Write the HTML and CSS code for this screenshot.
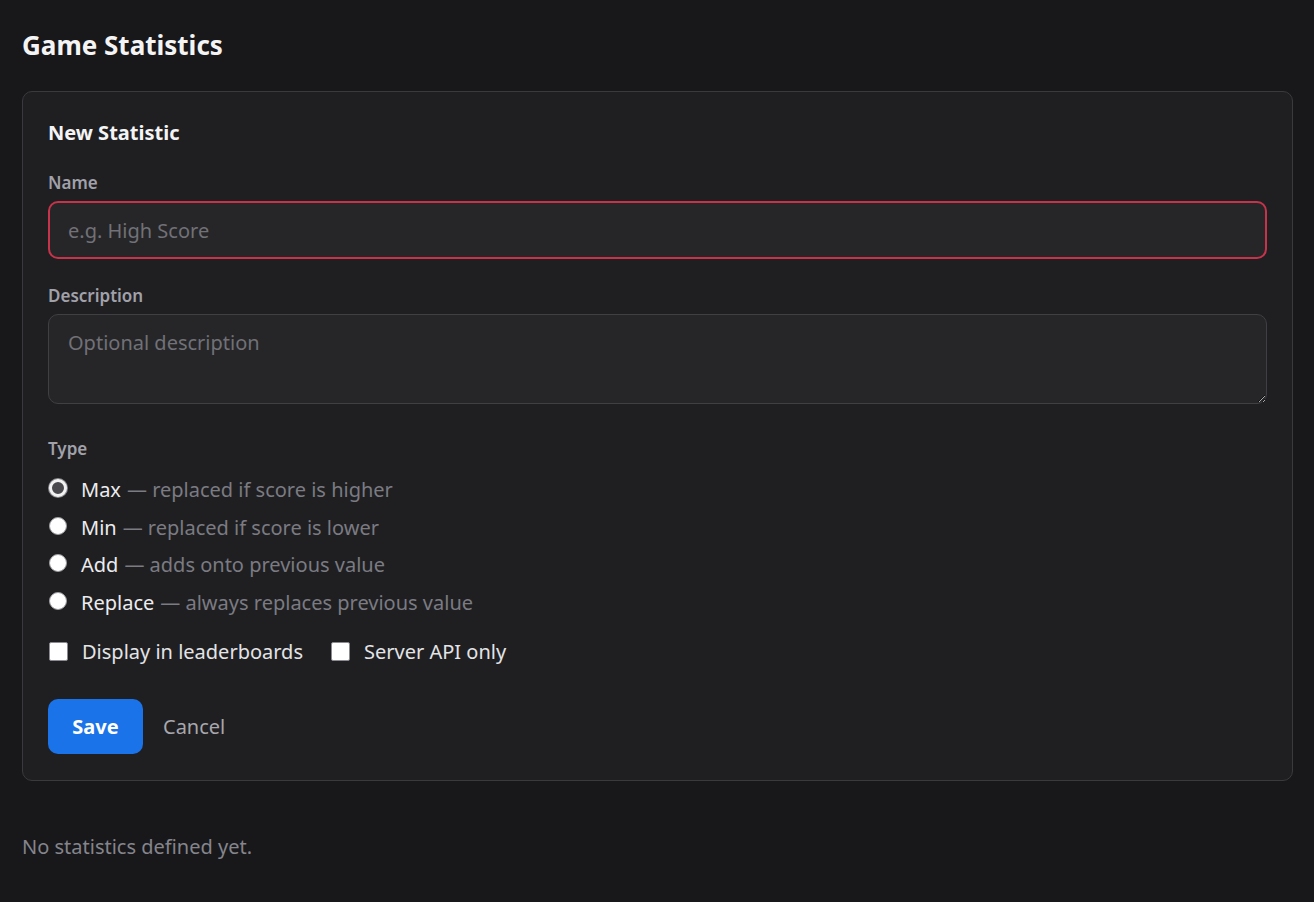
FILE: index.html
```html
<!DOCTYPE html>
<html lang="en">
<head>
<meta charset="utf-8">
<title>Game Statistics</title>
<link rel="stylesheet" href="styles.css">
</head>
<body>
<main class="page">
  <h1 class="page-title">Game Statistics</h1>
  <section class="card">
    <h2 class="card-title">New Statistic</h2>
    <div class="field">
      <label class="field-label" for="name">Name</label>
      <input class="text-input invalid" id="name" type="text" placeholder="e.g. High Score" autofocus>
    </div>
    <div class="field">
      <label class="field-label" for="desc">Description</label>
      <textarea class="text-input textarea" id="desc" placeholder="Optional description"></textarea>
    </div>
    <div class="field type-field">
      <div class="field-label">Type</div>
      <div class="radio-list">
        <label class="radio-row"><input type="radio" name="type" class="radio" checked><span class="opt-name">Max</span><span class="opt-desc">— replaced if score is higher</span></label>
        <label class="radio-row"><input type="radio" name="type" class="radio"><span class="opt-name">Min</span><span class="opt-desc">— replaced if score is lower</span></label>
        <label class="radio-row"><input type="radio" name="type" class="radio"><span class="opt-name">Add</span><span class="opt-desc">— adds onto previous value</span></label>
        <label class="radio-row"><input type="radio" name="type" class="radio"><span class="opt-name">Replace</span><span class="opt-desc">— always replaces previous value</span></label>
      </div>
    </div>
    <div class="check-row">
      <label class="check"><input type="checkbox" class="checkbox"><span>Display in leaderboards</span></label>
      <label class="check"><input type="checkbox" class="checkbox"><span>Server API only</span></label>
    </div>
    <div class="actions">
      <button class="btn-primary" type="button">Save</button>
      <button class="btn-link" type="button">Cancel</button>
    </div>
  </section>
  <p class="empty">No statistics defined yet.</p>
</main>
</body>
</html>
```

FILE: styles.css
```css
html, body {
  margin: 0;
  padding: 0;
  background: #18181b;
}
body {
  font-family: "Noto Sans", "Open Sans", "Liberation Sans", sans-serif;
  color: #e4e4e7;
  font-size: 20px;
}
.page {
  padding: 26px 21px 0 22px;
}
.page-title {
  margin: 0 0 27px 0;
  font-size: 26px;
  line-height: 38px;
  font-weight: 700;
  color: #f4f4f5;
}
.card {
  background: #1f1f22;
  border: 1px solid #3a3a3e;
  border-radius: 10px;
  padding: 25px 25px 26px 25px;
}
.card-title {
  margin: 0 0 22px 0;
  font-size: 20px;
  line-height: 32px;
  font-weight: 700;
  color: #f4f4f5;
}
.field {
  display: flex;
  flex-direction: column;
  margin-bottom: 25px;
}
.field-label {
  font-size: 17px;
  font-weight: 600;
  line-height: 24px;
  color: #a1a1aa;
  margin-bottom: 6px;
}
.text-input {
  box-sizing: border-box;
  width: 100%;
  background: #262629;
  border: 1px solid #3f3f44;
  border-radius: 10px;
  color: #e4e4e7;
  font-family: inherit;
  font-size: 20px;
  padding: 0 19px;
  outline: none;
  color-scheme: dark;
}
.text-input::placeholder {
  color: #717177;
}
.text-input.invalid {
  height: 58px;
  border: 2px solid #c8334c;
  padding: 0 18px;
  caret-color: #ffffff;
}
.textarea {
  display: block;
  height: 90px;
  padding: 13px 19px;
  resize: vertical;
  line-height: 30px;
}
.type-field {
  margin-top: 33px;
  margin-bottom: 19px;
}
.type-field .field-label {
  margin-bottom: 14px;
}
.radio-list {
  display: flex;
  flex-direction: column;
  gap: 7.5px;
}
.radio-row {
  display: flex;
  align-items: center;
  line-height: 30px;
}
.radio {
  appearance: none;
  -webkit-appearance: none;
  width: 18px;
  height: 18px;
  margin: 0 14px 4px 1px;
  border-radius: 50%;
  background: #ffffff;
  border: 1px solid #9a9aa0;
  box-sizing: border-box;
  flex: none;
}
.radio:checked {
  border: 3px solid #f2f2f2;
  background: #4a4a4e;
  box-shadow: 0 0 0 1px #8a8a90;
}
.opt-name {
  color: #ececef;
  margin-right: 6px;
}
.opt-desc {
  color: #7b7b82;
}
.check-row {
  display: flex;
  align-items: center;
  gap: 27px;
  margin-bottom: 32px;
}
.check {
  display: flex;
  align-items: center;
  line-height: 30px;
  color: #e4e4e7;
}
.checkbox {
  appearance: none;
  -webkit-appearance: none;
  width: 19px;
  height: 19px;
  margin: 0 14px 0 1px;
  background: #ffffff;
  border: 1px solid #8a8a90;
  border-radius: 2px;
  box-sizing: border-box;
  flex: none;
}
.actions {
  display: flex;
  align-items: center;
  gap: 20px;
}
.btn-primary {
  height: 55px;
  min-width: 95px;
  padding: 0 23px;
  background: #1a73e8;
  color: #ffffff;
  border: none;
  border-radius: 10px;
  font-family: inherit;
  font-size: 20px;
  font-weight: 700;
}
.btn-link {
  background: none;
  border: none;
  padding: 0;
  color: #a7a7ad;
  font-family: inherit;
  font-size: 20px;
}
.empty {
  margin: 51px 0 0 0;
  color: #85858c;
  font-size: 20px;
  line-height: 30px;
}
```
